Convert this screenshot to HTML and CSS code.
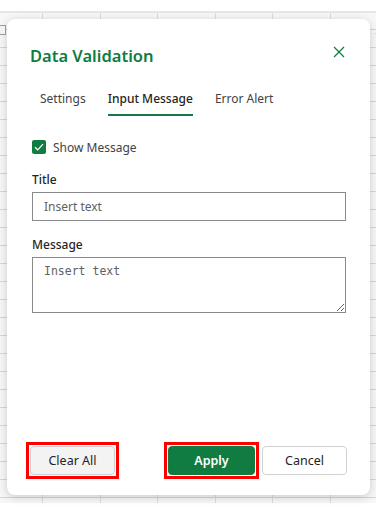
FILE: index.html
```html
<!DOCTYPE html>
<html lang="en">
<head>
    <meta charset="UTF-8">
    <meta name="viewport" content="width=device-width, initial-scale=1.0">
    <title>Data Validation</title>
    <link rel="stylesheet" href="styles.css">
</head>
<body>

    <div class="topbar"></div>

    <div class="sheet">
        <span class="sheet-icon"></span>
        <span class="sheet-f">f</span>

        <!-- Data Validation dialog -->
        <div class="dialog">
            <div class="dialog-head">
                <h2>Data Validation</h2>
                <button class="close-btn" aria-label="Close">
                    <svg width="12" height="12" viewBox="0 0 12 12"><path d="M1 1L11 11M11 1L1 11" stroke="#107c41" stroke-width="1.2" fill="none"/></svg>
                </button>
            </div>

            <div class="tabs">
                <span class="tab">Settings</span>
                <span class="tab active">Input Message</span>
                <span class="tab">Error Alert</span>
            </div>

            <div class="form">
                <label class="check">
                    <span class="box">
                        <svg width="10" height="8" viewBox="0 0 10 8"><path d="M1 4.2L3.7 6.8L9 1.2" stroke="#fff" stroke-width="1.2" fill="none"/></svg>
                    </span>
                    Show Message
                </label>

                <div class="field">
                    <label>Title</label>
                    <input type="text" placeholder="Insert text">
                </div>

                <div class="field">
                    <label>Message</label>
                    <textarea placeholder="Insert text"></textarea>
                </div>
            </div>

            <div class="actions">
                <span class="marked"><button class="btn btn-light">Clear All</button></span>
                <div class="right">
                    <span class="marked"><button class="btn btn-green">Apply</button></span>
                    <button class="btn btn-white">Cancel</button>
                </div>
            </div>
        </div>
    </div>

</body>
</html>
```

FILE: styles.css
```css
* { box-sizing: border-box; }
body { margin: 0; font-family: "Segoe UI", "Noto Sans", "Open Sans", sans-serif; color: #242424; background: #fff; height: 520px; overflow: hidden; }
.topbar { height: 13px; background: #fff; border-bottom: 2px solid #e6e6e6; }
.sheet { position: relative; height: 490px; padding: 6px 0 0 7px; background-color: #f7f7f7;
    background-image: repeating-linear-gradient(to bottom, transparent 0, transparent 17px, #d6d6d6 17px, #d6d6d6 18px),
                      repeating-linear-gradient(to right, transparent 0, transparent 42px, #dcdcdc 42px, #dcdcdc 43px, transparent 43px, transparent 57.5px);
    background-position: 0 -1px, 0 0; }
.sheet-icon { position: absolute; left: -3px; top: 12px; width: 9px; height: 10px; border: 1px solid #9a9a9a; background: #eef3f8; }
.sheet-f { position: absolute; right: -3px; top: 14px; font-size: 11px; color: #888; }

.dialog { width: 363px; height: 476px; background: #fff; border-radius: 8px; box-shadow: 0 2px 10px rgba(0, 0, 0, 0.18); display: flex; flex-direction: column; padding: 0 23px 0 23px; }
.dialog-head { display: flex; justify-content: space-between; align-items: center; height: 64px; padding-top: 8px; }
.dialog-head h2 { margin: 0; font-size: 16.5px; font-weight: 600; color: #107c41; }
.close-btn { border: none; background: none; padding: 0; margin: -6px 1px 0 0; width: 14px; height: 14px; display: flex; align-items: center; justify-content: center; cursor: pointer; }

.tabs { display: flex; gap: 22px; height: 33px; padding-left: 10px; align-items: stretch; }
.tab { font-size: 12px; color: #424242; display: flex; align-items: center; border-bottom: 2px solid transparent; }
.tab.active { color: #242424; font-weight: 500; border-bottom-color: #107c41; }

.form { padding: 24px 0 0 2px; flex: 1; }
.check { display: flex; align-items: center; gap: 7px; font-size: 12px; color: #424242; height: 14px; }
.box { width: 14px; height: 14px; border-radius: 2px; background: #107c41; display: flex; align-items: center; justify-content: center; }
.field { margin-top: 17px; }
.field + .field { margin-top: 15px; }
.field label { display: block; font-size: 12px; line-height: 17px; font-weight: 500; color: #242424; margin-bottom: 4px; }
.field input, .field textarea { display: block; width: 314px; border: 1px solid #8a8a8a; border-radius: 0; background: #fff; padding: 0 11px; font-size: 12px; color: #242424; outline: none; }
.field input { height: 29px; font-family: inherit; }
.field input::placeholder { color: #616161; }
.field textarea { height: 56px; padding-top: 6px; font-family: "DejaVu Sans Mono", "Liberation Mono", monospace; font-size: 11.5px; resize: vertical; }
.field textarea::placeholder { color: #616161; }

.actions { display: flex; justify-content: space-between; align-items: center; padding: 0 0 20px 0; }
.right { display: flex; align-items: center; gap: 3px; }
.btn { display: block; width: 86px; height: 29px; border-radius: 4px; font-family: inherit; font-size: 12.5px; cursor: pointer; }
.btn-light { background: #f3f3f3; border: 1px solid #cfcfcf; color: #242424; width: 85px; }
.btn-green { background: #107c41; border: 1px solid #107c41; color: #fff; font-weight: 600; width: 87px; }
.btn-white { background: #fff; border: 1px solid #d1d1d1; color: #242424; width: 85px; }
.marked { display: block; border: 3px solid #ff0000; padding: 1px; margin: -4px 0; }
.actions > .marked { margin-left: -4px; }
```
